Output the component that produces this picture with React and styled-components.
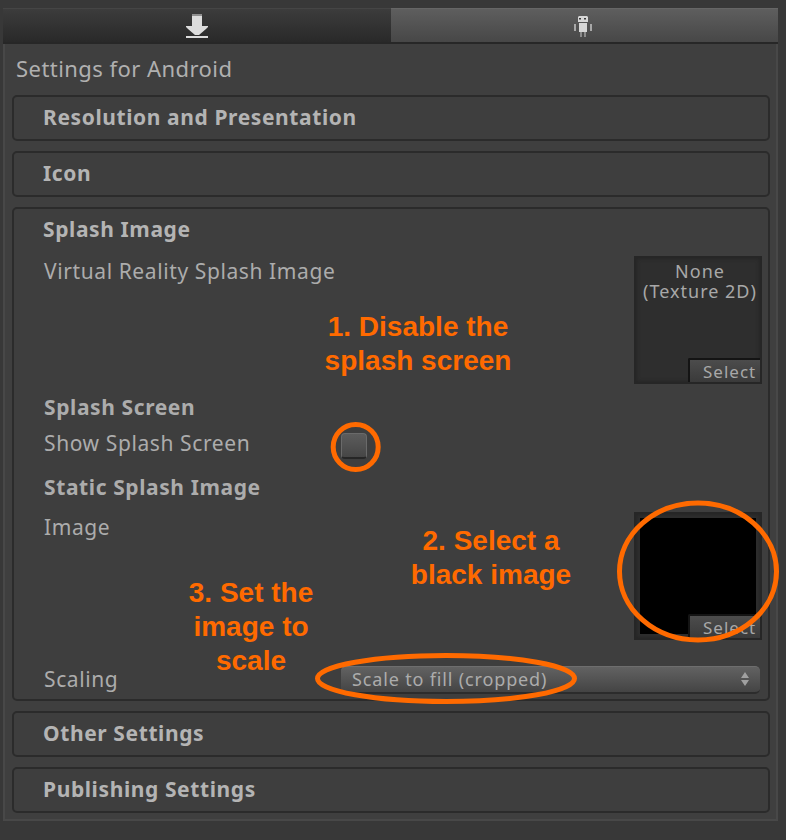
import React from 'react';
import styled, {createGlobalStyle} from 'styled-components';

const GlobalStyle = createGlobalStyle`
  html, body {
    margin: 0;
    padding: 0;
    background: #383838;
  }
`;

const DownloadIcon = () => (
  <svg width="22" height="24" viewBox="0 0 22 24" fill="#dcdcdc">
    <rect x="6" y="0" width="10" height="2" fill="#8e8e8e" />
    <path d="M6 2h10v10h6v1l-2 2-7 6H9l-7-6-2-2v-1h6z" />
    <rect x="0" y="22" width="22" height="2" />
  </svg>
);

const AndroidIcon = () => (
  <svg width="18" height="22" viewBox="0 0 18 22" fill="#d6d6d6">
    <path d="M5 1h8l1 1v5H4V2z" />
    <rect x="5" y="3" width="2" height="1.5" fill="#3a3a3a" />
    <rect x="10" y="3" width="2" height="1.5" fill="#3a3a3a" />
    <rect x="5" y="8" width="8" height="9" />
    <rect x="0" y="9" width="2" height="7" fill="#a8a8a8" />
    <rect x="16" y="9" width="2" height="7" fill="#a8a8a8" />
    <rect x="6" y="17" width="2" height="5" fill="#8c8c8c" />
    <rect x="10" y="17" width="2" height="5" fill="#8c8c8c" />
  </svg>
);

const Sort = () => (
  <svg width="8" height="14" viewBox="0 0 8 14" fill="#a0a0a0">
    <path d="M4 0l4 6H0zM0 8h8l-4 6z" />
  </svg>
);

const Page = styled.div`
  position: relative;
  width: 786px;
  height: 840px;
  box-sizing: border-box;
  padding: 8px 8px 0 3px;
  background: #383838;
  font-family: "Noto Sans", "DejaVu Sans", sans-serif;
  overflow: hidden;
`;

const Tabs = styled.div`
  display: flex;
  height: 36px;
  border-bottom: 2px solid #272727;
  box-sizing: border-box;
`;

const Tab = styled.div`
  flex: 1;
  display: flex;
  align-items: center;
  justify-content: center;
  background: ${p => p.$active
    ? 'linear-gradient(#5e5e5e, #474747)'
    : 'linear-gradient(#3c3c3c, #292929)'};
  border-top: 1px solid ${p => p.$active ? '#666' : '#454545'};

  svg {
    margin-right: ${p => p.$active ? 2 : 0}px;
  }
`;

const Panel = styled.div`
  height: 777px;
  box-sizing: border-box;
  padding: 0 6px 0 7px;
  background: #3f3f3f;
  border: 2px solid #484848;
  border-top: 0;
`;

const PanelTitle = styled.div`
  height: 51px;
  box-sizing: border-box;
  padding: 0 0 4px 4px;
  display: flex;
  align-items: center;
  color: #b0b0b0;
  font-size: 22px;
  letter-spacing: 0.45px;
`;

const Sections = styled.div`
  display: flex;
  flex-direction: column;
  gap: 10px;
`;

const Section = styled.div`
  box-sizing: border-box;
  height: ${p => p.$height || 46}px;
  border: 2px solid #2b2b2b;
  border-radius: 5px;
  background: #3e3e3e;
`;

const SectionTitle = styled.div`
  height: 40px;
  display: flex;
  align-items: center;
  padding-left: 29px;
  color: #b4b4b4;
  font-size: 21px;
  font-weight: 700;
  letter-spacing: 0.6px;
`;

const Body = styled.div`
  padding: 7px 6px 0 30px;
`;

const Row = styled.div`
  display: flex;
  justify-content: space-between;
  align-items: flex-start;
  height: ${p => p.$height}px;
`;

const Label = styled.div`
  color: #acacac;
  font-size: 21px;
  line-height: 30px;
  letter-spacing: 0.6px;
  font-weight: ${p => p.$bold ? 700 : 400};
  width: 297px;
  flex: none;
`;

const FieldRow = styled(Row)`
  justify-content: flex-start;
`;

const Checkbox = styled.div`
  width: 26px;
  height: 26px;
  margin-top: 5px;
  box-sizing: border-box;
  border-radius: 4px;
  background: linear-gradient(#5c5c5c, #464646);
  border: 1px solid #6a6a6a;
  border-bottom: 2px solid #262626;
`;

const Thumb = styled.div`
  position: relative;
  width: 128px;
  height: 128px;
  box-sizing: border-box;
  background: #2e2e2e;
  border: 2px solid #262626;
  box-shadow: inset 0 0 4px #222;
  color: #a8a8a8;
  font-size: 18px;
  line-height: 20px;
  letter-spacing: 1px;
  text-align: center;
  padding: 3px 0 0 4px;
  white-space: nowrap;
`;

const Black = styled.div`
  position: absolute;
  top: 4px;
  left: 4px;
  right: 4px;
  bottom: 4px;
  background: #000;
`;

const SelectBtn = styled.div`
  position: absolute;
  right: 0;
  bottom: 0;
  width: 72px;
  height: 24px;
  box-sizing: border-box;
  padding-left: 13px;
  background: linear-gradient(#4c4c4c, #3a3a3a);
  border-top: 2px solid #141414;
  border-left: 2px solid #141414;
  border-top-left-radius: 2px;
  color: #a8a8a8;
  font-size: 17px;
  line-height: 23px;
  letter-spacing: 1px;
  text-align: left;
`;

const Dropdown = styled.div`
  width: 419px;
  height: 28px;
  margin-top: 2px;
  box-sizing: border-box;
  display: flex;
  align-items: center;
  justify-content: space-between;
  padding: 0 11px 2px 11px;
  background: linear-gradient(#626262, #444);
  border-top: 1px solid #6e6e6e;
  border-bottom: 2px solid #2c2c2c;
  border-radius: 5px;
  color: #acacac;
  font-size: 18px;
  letter-spacing: 0.85px;
`;

const Note = styled.div`
  position: absolute;
  left: ${p => p.$x}px;
  top: ${p => p.$y}px;
  width: ${p => p.$w}px;
  color: #ff6a00;
  font-family: "Liberation Sans", Arial, sans-serif;
  font-weight: 700;
  font-size: 28px;
  line-height: 34px;
  text-align: center;
`;

const Overlay = styled.svg`
  position: absolute;
  top: 0;
  left: 0;
  pointer-events: none;
`;

export default function App() {
  return (
    <Page>
      <GlobalStyle />
      <Tabs>
        <Tab><DownloadIcon /></Tab>
        <Tab $active><AndroidIcon /></Tab>
      </Tabs>
      <Panel>
        <PanelTitle>Settings for Android</PanelTitle>
        <Sections>
          <Section><SectionTitle>Resolution and Presentation</SectionTitle></Section>
          <Section><SectionTitle>Icon</SectionTitle></Section>
          <Section $height={494}>
            <SectionTitle>Splash Image</SectionTitle>
            <Body>
              <Row $height={136}>
                <Label>Virtual Reality Splash Image</Label>
                <Thumb>
                  None<br />(Texture 2D)
                  <SelectBtn>Select</SelectBtn>
                </Thumb>
              </Row>
              <Row $height={36}><Label $bold>Splash Screen</Label></Row>
              <FieldRow $height={44}>
                <Label>Show Splash Screen</Label>
                <Checkbox />
              </FieldRow>
              <Row $height={40}><Label $bold>Static Splash Image</Label></Row>
              <Row $height={152}>
                <Label>Image</Label>
                <Thumb>
                  <Black />
                  <SelectBtn>Select</SelectBtn>
                </Thumb>
              </Row>
              <FieldRow $height={40}>
                <Label>Scaling</Label>
                <Dropdown>Scale to fill (cropped)<Sort /></Dropdown>
              </FieldRow>
            </Body>
          </Section>
          <Section><SectionTitle>Other Settings</SectionTitle></Section>
          <Section><SectionTitle>Publishing Settings</SectionTitle></Section>
        </Sections>
      </Panel>
      <Note $x={288} $y={310} $w={260}>1. Disable the<br />splash screen</Note>
      <Note $x={361} $y={524} $w={260}>2. Select a<br />black image</Note>
      <Note $x={121} $y={576} $w={260}>3. Set the<br />image to<br />scale</Note>
      <Overlay width="786" height="840" fill="none" stroke="#ff6a00" strokeWidth="5">
        <circle cx="355.7" cy="447" r="22.5" />
        <ellipse cx="698" cy="571.5" rx="78.5" ry="68.5" />
        <ellipse cx="446" cy="678.5" rx="128.5" ry="23" />
      </Overlay>
    </Page>
  );
}
